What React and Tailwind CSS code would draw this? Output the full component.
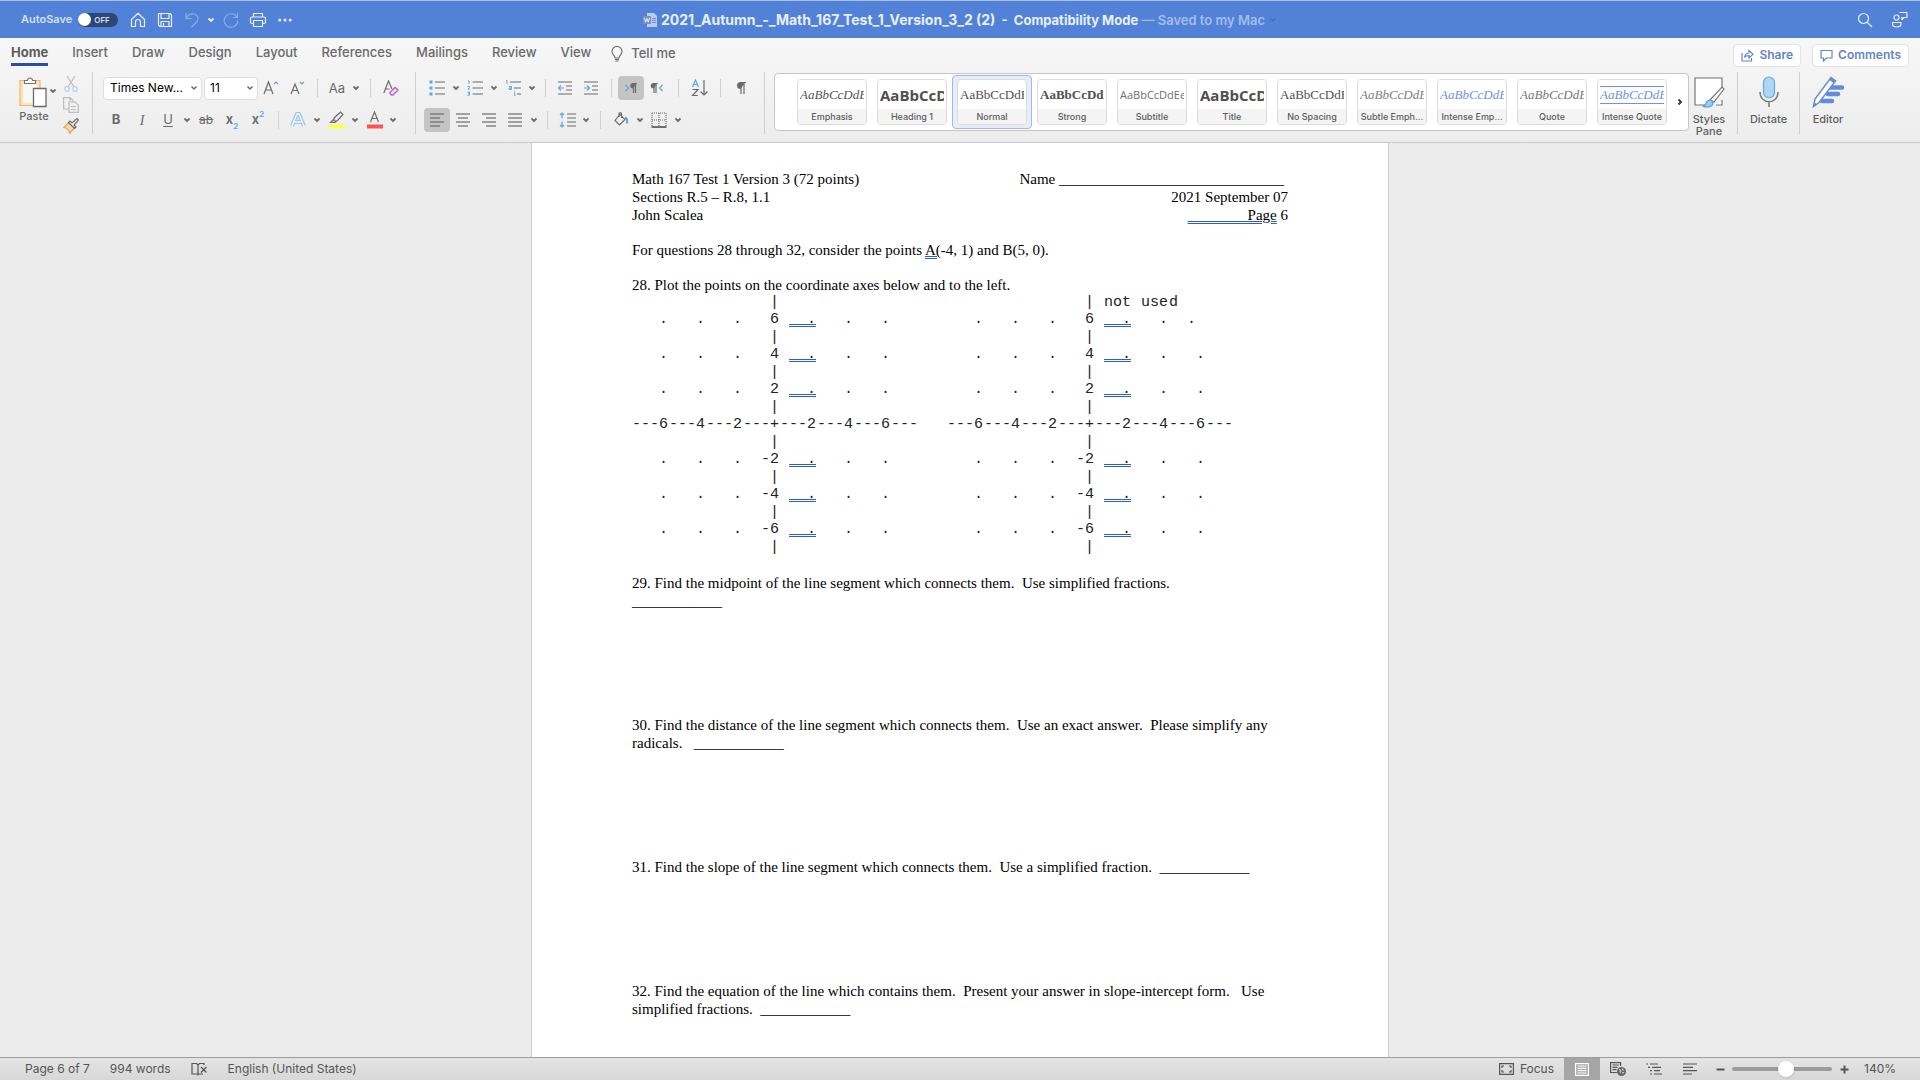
import React from "react";
import clsx from "clsx";

const TABS = ["Home", "Insert", "Draw", "Design", "Layout", "References", "Mailings", "Review", "View"];

const STYLES = [
  { name: "Emphasis", sample: "font-['Liberation_Serif',serif] text-[13px] italic text-[#555]" },
  { name: "Heading 1", sample: "font-['Open_Sans',sans-serif] text-[15px] font-bold text-[#4f4f4f]" },
  { name: "Normal", sample: "font-['Liberation_Serif',serif] text-[13px] text-[#4f4f4f]", active: true },
  { name: "Strong", sample: "font-['Liberation_Serif',serif] text-[13px] font-bold text-[#4f4f4f]" },
  { name: "Subtitle", sample: "font-['Open_Sans',sans-serif] text-[11px] text-[#6f6f6f]" },
  { name: "Title", sample: "font-['Open_Sans',sans-serif] text-[15px] font-bold text-[#4f4f4f]" },
  { name: "No Spacing", sample: "font-['Liberation_Serif',serif] text-[13px] text-[#4f4f4f]" },
  { name: "Subtle Emph...", sample: "font-['Liberation_Serif',serif] text-[13px] italic text-[#808080]" },
  { name: "Intense Emp...", sample: "font-['Liberation_Serif',serif] text-[13px] italic text-[#6f93de]" },
  { name: "Quote", sample: "font-['Liberation_Serif',serif] text-[13px] italic text-[#777]" },
  { name: "Intense Quote", sample: "font-['Liberation_Serif',serif] text-[13px] italic text-[#6f93de] border-y border-[#6f93de]" },
];

// every row is cut into cells of four characters, "_" marks a flagged blank
const POINTS = "   .   .   .";
const AXIS = "---6---4---2---+---2---4---6---";
const TICK = "               |";

function buildRows(note, firstTail) {
  const label = (n, tail) => POINTS + n.padStart(4) + " __." + (tail || "   .   .");
  return [
    TICK + note,
    label("6", firstTail),
    TICK,
    label("4"),
    TICK,
    label("2"),
    TICK,
    AXIS,
    TICK,
    label("-2"),
    TICK,
    label("-4"),
    TICK,
    label("-6"),
    TICK,
  ];
}

function Svg({ w = 16, h = 16, label, children, className }) {
  return (
    <svg
      width={w}
      height={h}
      viewBox={`0 0 ${w} ${h}`}
      fill="none"
      stroke="currentColor"
      strokeWidth="1.2"
      aria-label={label}
      className={clsx("shrink-0", className)}
    >
      {children}
    </svg>
  );
}

function Chevron({ label = "More options" }) {
  return (
    <button aria-label={label} className="flex w-3 shrink-0 justify-center text-[#6b6b6b]">
      <Svg w={8} h={6}>
        <path d="M1.5 1.5 4 4l2.500-2.500" strokeWidth="1.800" />
      </Svg>
    </button>
  );
}

function Tool({ label, active, children }) {
  return (
    <button
      aria-label={label}
      className={clsx(
        "flex h-6 w-[26px] shrink-0 items-center justify-center rounded-sm text-[#6b6b6b]",
        active && "bg-[#c4c4c4]"
      )}
    >
      {children}
    </button>
  );
}

function Sep({ wide }) {
  return (
    <div className={clsx("flex shrink-0 justify-center", wide ? "w-4" : "w-[14px]")}>
      <div className="h-[18px] w-px bg-[#d0d0d0]" />
    </div>
  );
}

function GroupSep() {
  return <div className="h-[62px] w-px shrink-0 bg-[#cfcfcf]" />;
}

function AlignIcon({ lines }) {
  return (
    <Svg w={16} h={16}>
      {lines.map(([from, to], i) => (
        <path key={i} d={`M${from} ${2 + i * 4}H${to}`} />
      ))}
    </Svg>
  );
}

function TitleButton({ label, dim, children }) {
  return (
    <button
      aria-label={label}
      className={clsx("flex w-[27px] justify-center", dim ? "text-[#8dace5]" : "text-[#e8effb]")}
    >
      {children}
    </button>
  );
}

function TitleBar() {
  return (
    <header className="grid h-[38px] shrink-0 grid-cols-[1fr_auto_1fr] items-center border-t border-[#a9c1eb] bg-[#5282d7] text-[#e8effb]">
      <div className="flex items-center pl-[21px]">
        <label className="flex items-center gap-[6px] text-[11px] font-semibold text-[#d3e0f6]">
          <span>AutoSave</span>
          <span className="relative flex h-[14px] w-10 items-center rounded-full bg-[#2c4677]">
            <input type="checkbox" className="absolute inset-0 appearance-none" />
            <span className="size-[13px] rounded-full bg-white" />
            <span className="pl-[3px] text-[8px] font-semibold">OFF</span>
          </span>
        </label>
        <div className="flex items-center pl-[6px]">
          <TitleButton label="Home">
            <Svg>
              <path d="M1.500 7.500 8 1.300l6.500 6.200V14.500h-4V10a2.500 2.500 0 0 0-5 0v4.500h-4z" strokeLinejoin="round" />
            </Svg>
          </TitleButton>
          <TitleButton label="Save">
            <Svg>
              <path d="M1.500 1.500h11.500l1.500 1.500v11.500h-11.500l-1.500-1.500zM4 1.500v5h8v-5M4 14.500v-5h8v5M6.500 11v3.500" strokeLinejoin="round" />
            </Svg>
          </TitleButton>
          <TitleButton label="Undo" dim>
            <Svg>
              <path d="M2 1v5.500h5.500M2 6.500C4 3 7 1.500 10 2c4 .8 5.200 4.500 3 7.500L7.500 15" />
            </Svg>
          </TitleButton>
          <button aria-label="Undo history" className="flex w-3 justify-center">
            <Svg w={8} h={6}>
              <path d="M1.500 1.500 4 4l2.500-2.500" strokeWidth="1.800" />
            </Svg>
          </button>
          <TitleButton label="Redo" dim>
            <Svg>
              <path d="M14.500 1v4.500H10M13.800 5A6.800 6.800 0 1 0 14.800 8.500" />
            </Svg>
          </TitleButton>
          <TitleButton label="Print">
            <Svg w={18}>
              <path d="M4.500 5V1.500h9V5M4.500 11.500H3A1.500 1.500 0 0 1 1.500 10V6.500A1.500 1.500 0 0 1 3 5h12a1.500 1.500 0 0 1 1.500 1.500V10a1.500 1.500 0 0 1-1.500 1.500h-1.500M4.500 8.500h9v6h-9z" strokeLinejoin="round" />
            </Svg>
          </TitleButton>
          <TitleButton label="More">
            <Svg w={14} h={4}>
              <g fill="currentColor" stroke="none">
                <circle cx="1.800" cy="2" r="1.500" />
                <circle cx="7" cy="2" r="1.500" />
                <circle cx="12.200" cy="2" r="1.500" />
              </g>
            </Svg>
          </TitleButton>
        </div>
      </div>

      <div className="flex items-center gap-1 whitespace-pre">
        <Svg w={14} h={14}>
          <path d="M4 0h7l3 3v11H4z" fill="#b9cdf0" stroke="none" />
          <path d="M9 5.500h4M9 7.500h4M9 9.500h4" stroke="#6a90d6" strokeWidth="1" />
          <rect x="0" y="3" width="8" height="8" fill="#8094bb" stroke="none" />
          <path d="m1.500 5 1.200 4L4 5.500 5.300 9l1.200-4" stroke="#dfe8f8" strokeWidth="1" />
        </Svg>
        <h1 className="text-[13px] font-bold">
          <span className="text-[14px]">2021_Autumn_-_Math_167_Test_1_Version_3_2 (2)</span>
          {"  -  Compatibility Mode"}
          <span className="font-semibold text-[#a3bdea]"> — Saved to my Mac</span>
        </h1>
        <Svg w={8} h={6} className="text-[#4270c2]">
          <path d="M1.500 1.500 4 4l2.500-2.500" strokeWidth="1.500" />
        </Svg>
      </div>

      <div className="flex items-center justify-end gap-[18px] pr-3">
        <button aria-label="Search">
          <Svg>
            <circle cx="6.500" cy="6.500" r="5" />
            <path d="m10.200 10.200 4.800 4.800" />
          </Svg>
        </button>
        <button aria-label="Presence">
          <Svg w={17} h={17}>
            <circle cx="5.500" cy="6.500" r="2.500" />
            <path d="M1.500 11.500h8.500v1.500c0 4-8.500 4-8.500 0zM8.500 1.500h7.500v5h-3l-2 2v-2h-1" strokeLinejoin="round" />
          </Svg>
        </button>
      </div>
    </header>
  );
}

function TabBar() {
  return (
    <nav className="flex h-[34px] items-center pr-[11px] pl-[11px] text-[13px] font-medium text-[#6a6a6a]">
      <div className="flex h-full items-center gap-6">
        {TABS.map((tab, i) => (
          <a
            key={tab}
            href={`#${tab.toLowerCase()}`}
            className={clsx(
              "flex h-7 self-start border-b-3 pt-[5px]",
              i === 0 ? "border-[#27509b] font-bold text-[#5c5c5c]" : "border-transparent"
            )}
          >
            {tab}
          </a>
        ))}
      </div>
      <button className="ml-5 flex items-center gap-2 pb-[3px]">
        <Svg w={12} h={16}>
          <path d="M4 12c0-2.500-3-3.500-3-6.500a5 5 0 0 1 10 0c0 3-3 4-3 6.500zM4 13.500h4M4.500 15h3" strokeWidth="1.100" />
        </Svg>
        Tell me
      </button>
      <div className="ml-auto flex gap-[11px] text-[12px] font-semibold text-[#6486c4]">
        <button className="flex h-[23px] items-center gap-[5px] rounded-sm border border-[#e2e2e2] bg-white px-[7px]">
          <Svg w={13} h={13}>
            <path d="M1 4v8h9.500V9M3.500 8.500C4 5.500 5.500 4 8 4V1.500l4 3.800L8 9V6.500c-2 0-3.500.5-4.500 2z" />
          </Svg>
          Share
        </button>
        <button className="flex h-[23px] items-center gap-[5px] rounded-sm border border-[#e2e2e2] bg-white px-[7px]">
          <Svg w={13} h={13}>
            <path d="M1 1.500h11v7.500H6.500L3.500 12V9H1z" />
          </Svg>
          Comments
        </button>
      </div>
    </nav>
  );
}

function ClipboardGroup() {
  return (
    <div className="flex w-[92px] shrink-0 justify-end gap-1 pr-[13px] pt-1">
      <div className="flex flex-col items-center">
        <div className="flex items-start">
          <button aria-label="Paste" className="flex pl-[10px]">
            <Svg w={28} h={32} className="text-[#6b6b6b]">
              <path d="M1 4.500h20v25H1z" fill="#fde3b5" stroke="#f0b76c" />
              <path d="M4 7h14v20H4z" fill="#f7f7f7" stroke="none" />
              <path d="M5.500 7.500V4.500h3a2.500 2.500 0 0 1 5 0h3v3z" fill="#fff" stroke="#777" />
              <path d="M14.500 12.500h12.500v18H14.500z" fill="#fff" strokeWidth="1.300" />
            </Svg>
          </button>
          <div className="pt-3">
            <Chevron label="Paste options" />
          </div>
        </div>
        <span className="text-[11px] leading-[17px] font-medium text-[#666]">Paste</span>
      </div>
      <div className="flex flex-col gap-[5px]">
        <button aria-label="Cut">
          <Svg className="text-[#bdbdbd]">
            <path d="m4 0 7 11M12 0 5 11" />
            <circle cx="4" cy="13" r="2.300" stroke="#b4d3ee" />
            <circle cx="12" cy="13" r="2.300" stroke="#b4d3ee" />
          </Svg>
        </button>
        <button aria-label="Copy">
          <Svg className="text-[#bdbdbd]">
            <path d="M6 12H.600V.600H7l3 3V5M7 .600V4" />
            <path d="M6 5h6l3.400 3v7.400H6zM8 9.500h5M8 12.500h5" />
          </Svg>
        </button>
        <button aria-label="Format painter">
          <Svg className="text-[#666]">
            <path d="M6 4.500.800 9.500c3 .5 5 2.500 6 5.700L12 9.500z" fill="#fbd7ad" stroke="#ee9f58" />
            <path d="m5.500 4.500 6 6 1.500-1.500-2-2L15.500 2 14 .600 9 5 7 3z" fill="#fff" />
          </Svg>
        </button>
      </div>
    </div>
  );
}

function FontGroup() {
  return (
    <div className="w-[322px] shrink-0 pl-[10px]">
      <div className="flex h-8 items-center">
        <div className="flex items-center gap-[2px]">
          <span className="relative flex items-center">
            <select
              aria-label="Font"
              className="h-[23px] w-[99px] appearance-none rounded-sm border border-[#dedede] bg-white px-[6px] text-[12px] text-black"
            >
              <option>Times New...</option>
            </select>
            <Svg w={8} h={6} className="pointer-events-none absolute right-1 text-[#6b6b6b]">
              <path d="M1.500 1.500 4 4l2.500-2.500" strokeWidth="1.500" />
            </Svg>
          </span>
          <span className="relative flex items-center">
            <select
              aria-label="Font size"
              className="h-[23px] w-[54px] appearance-none rounded-sm border border-[#dedede] bg-white px-[5px] text-[12px] text-black"
            >
              <option>11</option>
            </select>
            <Svg w={8} h={6} className="pointer-events-none absolute right-1 text-[#6b6b6b]">
              <path d="M1.500 1.500 4 4l2.500-2.500" strokeWidth="1.500" />
            </Svg>
          </span>
        </div>
        <Tool label="Grow font">
          <Svg>
            <path d="m1 14 4.500-12 4.500 12M2.500 10h6" />
            <path d="m11 4 2-2 2 2" stroke="#5aa9dd" />
          </Svg>
        </Tool>
        <Tool label="Shrink font">
          <Svg>
            <path d="M2 14 6 4l4 10M3.500 10.500h5" />
            <path d="m11 2 2 2 2-2" stroke="#5aa9dd" />
          </Svg>
        </Tool>
        <Sep />
        <Tool label="Change case">
          <span className="text-[13px] leading-4">Aa</span>
        </Tool>
        <Chevron />
        <Sep wide />
        <Tool label="Clear formatting">
          <Svg>
            <path d="M.800 13 5.500 1l3.500 8M2.500 9h4" />
            <path d="m7 12.500 5-5 3 2.500-5 5H8.500L7 13.500z" stroke="#b869c8" strokeWidth="1.500" fill="#f5e4f8" />
          </Svg>
        </Tool>
      </div>
      <div className="flex h-8 items-center">
        <Tool label="Bold">
          <span className="text-[13px] font-bold">B</span>
        </Tool>
        <Tool label="Italic">
          <span className="font-['Liberation_Serif',serif] text-[14px] italic">I</span>
        </Tool>
        <Tool label="Underline">
          <span className="text-[13px] underline underline-offset-2">U</span>
        </Tool>
        <Chevron />
        <Tool label="Strikethrough">
          <span className="text-[12px] line-through">ab</span>
        </Tool>
        <Tool label="Subscript">
          <span className="text-[13px] font-semibold">x</span>
          <span className="self-end text-[8px] font-semibold text-[#5aa9dd]">2</span>
        </Tool>
        <Tool label="Superscript">
          <span className="text-[13px] font-semibold">x</span>
          <span className="self-start text-[8px] font-semibold text-[#5aa9dd]">2</span>
        </Tool>
        <Sep />
        <Tool label="Text effects">
          <Svg>
            <path d="M2 14 7 2h2l5 12M4.500 10h7" stroke="#9cc6ea" strokeWidth="4" />
            <path d="M2 14 7 2h2l5 12M4.500 10h7" stroke="#f4f9fd" strokeWidth="1.500" />
          </Svg>
        </Tool>
        <Chevron />
        <Tool label="Highlight">
          <Svg w={17} h={18}>
            <path d="m6 7 6.500-6L15 3.500 9 10H6zM6 8l-3.500 3.500H7L8.500 10" />
            <path d="M1 13.500h16v4H1z" fill="#ffff52" stroke="none" />
          </Svg>
        </Tool>
        <Chevron />
        <Tool label="Font colour">
          <Svg w={17} h={18}>
            <path d="M4.500 11 8.500 1l4 10M6 7.500h5" />
            <path d="M1 13.500h16v4H1z" fill="#ff5252" stroke="none" />
          </Svg>
        </Tool>
        <Chevron />
      </div>
    </div>
  );
}

function ParagraphGroup() {
  return (
    <div className="w-[348px] shrink-0 pl-[8px]">
      <div className="flex h-8 items-center">
        <Tool label="Bullets">
          <Svg>
            <path d="M6 2h10M6 8h10M6 14h10" />
            <path d="M.500 .500h3v3h-3zM.500 6.500h3v3h-3zM.500 12.500h3v3h-3z" fill="#5aa9dd" stroke="none" />
          </Svg>
        </Tool>
        <Chevron />
        <Tool label="Numbering">
          <Svg>
            <path d="M5.500 2H16M5.500 8H16M5.500 14H16" />
            <path d="M1 1h1v3M.500 6.500h2v1.200l-1.500 1.500h1.800M.500 12h2v3.200H.500M1 13.600h1.500" stroke="#5aa9dd" strokeWidth="1" />
          </Svg>
        </Tool>
        <Chevron />
        <Tool label="Multilevel list">
          <Svg>
            <path d="M5 2h11M9 8h7M12 14h4" />
            <path d="M1 .500h1V4M4 6.500h2.500v3H4V8h2.500M9 12.500h.8V16M9.500 10.500v.8" stroke="#5aa9dd" strokeWidth="1" />
          </Svg>
        </Tool>
        <Chevron />
        <Sep />
        <Tool label="Decrease indent">
          <Svg>
            <path d="M1 2h14M9 6h6M9 10h6M1 14h14" />
            <path d="M7 8H1.500M4 5.500 1.500 8 4 10.500" stroke="#5aa9dd" />
          </Svg>
        </Tool>
        <Tool label="Increase indent">
          <Svg>
            <path d="M1 2h14M9 6h6M9 10h6M1 14h14" />
            <path d="M1 8h5.500M4 5.500 6.500 8 4 10.500" stroke="#5aa9dd" />
          </Svg>
        </Tool>
        <Sep />
        <Tool label="Left-to-right text" active>
          <Svg w={14} h={12}>
            <path d="m1.500 3 3 3-3 3" stroke="#5aa9dd" />
            <path d="M9 6.500a2.700 2.700 0 0 1 0-5.500h4" fill="currentColor" stroke="none" />
            <path d="M9.500 1v10M11.500 1v10M8.500 1.500H13" />
          </Svg>
        </Tool>
        <Tool label="Right-to-left text">
          <Svg w={14} h={12}>
            <path d="m12.500 3-3 3 3 3" stroke="#5aa9dd" />
            <path d="M3.500 6.500a2.700 2.700 0 0 1 0-5.500h4" fill="currentColor" stroke="none" />
            <path d="M4 1v10M6 1v10M3 1.500h4.500" />
          </Svg>
        </Tool>
        <Sep wide />
        <Tool label="Sort">
          <Svg w={17} h={18}>
            <path d="M1.500 8 4.500 1l3 7M2.500 5.500h4" stroke="#5aa9dd" />
            <path d="M1.500 10.500h5.500l-5.500 6H7M13 1v15M9.500 12.500 13 16l3.500-3.500" />
          </Svg>
        </Tool>
        <Sep wide />
        <Tool label="Show formatting marks">
          <Svg w={12} h={14}>
            <path d="M5.500 8a3.500 3.500 0 0 1 0-7h5" fill="currentColor" stroke="none" />
            <path d="M6 1v12M9 1v12M5 1.500h6" />
          </Svg>
        </Tool>
      </div>
      <div className="flex h-8 items-center">
        <Tool label="Align left" active>
          <AlignIcon lines={[[1, 15], [1, 11], [1, 15], [1, 11]]} />
        </Tool>
        <Tool label="Align centre">
          <AlignIcon lines={[[1, 15], [3, 13], [1, 15], [3, 13]]} />
        </Tool>
        <Tool label="Align right">
          <AlignIcon lines={[[1, 15], [5, 15], [1, 15], [5, 15]]} />
        </Tool>
        <Tool label="Justify">
          <AlignIcon lines={[[1, 15], [1, 15], [1, 15], [1, 15]]} />
        </Tool>
        <Chevron />
        <Sep />
        <Tool label="Line spacing">
          <Svg w={17}>
            <path d="M8 2h9M8 6h9M8 10h9M8 14h9" />
            <path d="M3 1v5.500M1 3l2-2 2 2M3 9.500V15M1 13l2 2 2-2" stroke="#5aa9dd" />
          </Svg>
        </Tool>
        <Chevron />
        <Sep wide />
        <Tool label="Shading">
          <Svg>
            <path d="M6 3.500 2 8.500l4.500 4.500 5.500-5.500-5-5zM6 5V1.500c0-1 2.500-1 2.500 0V6" />
            <path d="M12 5.500c2 .5 2.500 2.500 2 6" stroke="#5aa9dd" strokeWidth="2" />
          </Svg>
        </Tool>
        <Chevron />
        <Tool label="Borders">
          <Svg>
            <path d="M1 1h14M1 8h14M1 1v14M8 1v14M15 1v14" strokeDasharray="1 1" />
            <path d="M.500 15h15" strokeWidth="1.500" stroke="#444" />
          </Svg>
        </Tool>
        <Chevron />
      </div>
    </div>
  );
}

function StyleGallery() {
  return (
    <div className="ml-[9px] mt-px flex h-[58px] min-w-0 flex-1 items-center rounded-sm border border-[#c6c6c6] bg-white">
      <div className="flex min-w-0 flex-1 overflow-hidden pl-[17px]">
        {STYLES.map((style) => (
          <button
            key={style.name}
            className={clsx(
              "flex h-[54px] w-20 shrink-0 items-center justify-center rounded-sm border",
              style.active ? "border-[#9fb9e8] bg-[#e6edf8]" : "border-transparent"
            )}
          >
            <span className="flex h-[46px] w-[70px] flex-col overflow-hidden rounded-sm border border-[#dcdcdc] bg-white">
              <span className="flex flex-1 items-center px-[2px]">
                <span className={clsx("w-full overflow-hidden text-left leading-4 whitespace-nowrap", style.sample)}>
                  AaBbCcDdEe
                </span>
              </span>
              <span className="h-[15px] bg-[#f4f4f4] text-[9px] leading-[15px] font-medium text-[#5c5c5c]">
                {style.name}
              </span>
            </span>
          </button>
        ))}
      </div>
      <button aria-label="More styles" className="flex w-[17px] shrink-0 justify-center text-[#333]">
        <Svg w={6} h={8}>
          <path d="m1.500 1.500 2.500 2.500-2.500 2.500" strokeWidth="1.800" />
        </Svg>
      </button>
    </div>
  );
}

function BigButtons() {
  return (
    <div className="flex shrink-0 text-[11px] leading-3 font-medium text-[#5f5f5f]">
      <button className="flex w-12 flex-col items-center gap-[5px] pr-2 pt-1">
        <Svg w={32} h={32}>
          <path d="M12 29H2V2h27v10M29 24v5h-6" fill="#fff" stroke="#777" />
          <path d="M17 24 29 11l2 2-10 13z" fill="#fff" stroke="#777" />
          <path d="M10 30c4 0 2-6 7-6 4 1 4 6-1 7-3 0-5 0-6-1z" fill="#9ccdf0" stroke="#5a9fd6" />
        </Svg>
        <span>Styles Pane</span>
      </button>
      <GroupSep />
      <button className="flex w-[61px] flex-col items-center gap-[5px] pt-1">
        <Svg w={20} h={32}>
          <rect x="4.500" y="1" width="11" height="21" rx="5.500" fill="#add6f4" stroke="#6aa7d8" />
          <path d="M1 16c0 13 18 13 18 0M10 26v5" stroke="#7a7a7a" strokeWidth="1.500" />
        </Svg>
        Dictate
      </button>
      <GroupSep />
      <button className="mr-16 flex w-[56px] flex-col items-center gap-[5px] pt-1">
        <Svg w={32} h={32}>
          <path d="M18 11.500h12M16 18h10M10 25h10" stroke="#638cdb" strokeWidth="4.500" strokeLinecap="round" />
          <path d="M19 1.500 23.500 5 7 26.500 1.500 30.500 3 23z" fill="#fff" stroke="#638cdb" strokeWidth="1.500" />
          <path d="m17 3.500 5 4 2-2.500-5-4z" fill="#638cdb" stroke="none" />
          <path d="m1 31 1-5 3 2.500z" fill="#638cdb" stroke="none" />
        </Svg>
        Editor
      </button>
    </div>
  );
}

function Ribbon() {
  return (
    <div className="shrink-0 border-b border-[#c9c9c9] bg-linear-to-b from-[#f7f7f7] to-[#ededed]">
      <TabBar />
      <div className="flex h-[70px] items-start">
        <ClipboardGroup />
        <GroupSep />
        <FontGroup />
        <GroupSep />
        <ParagraphGroup />
        <GroupSep />
        <StyleGallery />
        <BigButtons />
      </div>
    </div>
  );
}

function Flag({ children }) {
  return (
    <span className="underline decoration-[#2b5fd9] decoration-double decoration-1 underline-offset-1">
      {children}
    </span>
  );
}

function Axes({ rows }) {
  return (
    <div className="font-['Liberation_Mono',monospace] text-[15px] whitespace-pre text-[#222]">
      {rows.map((row, i) => (
        <div
          key={i}
          className={clsx("grid grid-cols-[repeat(8,37px)]", i % 2 ? "leading-[18px]" : "leading-[17px]")}
        >
          {row.match(/.{1,4}/g).map((cell, j) => (
            <span key={j}>
              {cell.includes("__") ? (
                <>
                  {" "}
                  <Flag>{"  ."}</Flag>
                </>
              ) : (
                cell
              )}
            </span>
          ))}
        </div>
      ))}
    </div>
  );
}

function Page() {
  return (
    <article className="w-[858px] border-x border-[#cdcdcd] bg-white px-[100px] pt-[27px] font-['Liberation_Serif',serif] text-[15px] leading-[18px] whitespace-pre text-black">
      <div className="flex justify-between">
        <div>
          <p>Math 167 Test 1 Version 3 (72 points)</p>
          <p>Sections R.5 – R.8, 1.1</p>
          <p>John Scalea</p>
        </div>
        <div className="text-right">
          <p className="pr-1">Name ______________________________</p>
          <p>2021 September 07</p>
          <p>
            <Flag>{"                Page"}</Flag> 6
          </p>
        </div>
      </div>

      <p className="mt-[17px]">
        For questions 28 through 32, consider the points <Flag>A(</Flag>-4, 1) and B(5, 0).
      </p>

      <section className="mt-[17px]">
        <p>28. Plot the points on the coordinate axes below and to the left.</p>
        <div className="flex gap-[19px]">
          <Axes rows={buildRows("")} />
          <Axes rows={buildRows(" not used", "   .  .")} />
        </div>
      </section>

      <section className="mt-[18px]">
        <p>29. Find the midpoint of the line segment which connects them.  Use simplified fractions.</p>
        <p>____________</p>
      </section>

      <section className="mt-[106px]">
        <p>30. Find the distance of the line segment which connects them.  Use an exact answer.  Please simplify any</p>
        <p>radicals.   ____________</p>
      </section>

      <section className="mt-[106px]">
        <p>31. Find the slope of the line segment which connects them.  Use a simplified fraction.  ____________</p>
      </section>

      <section className="mt-[106px]">
        <p>32. Find the equation of the line which contains them.  Present your answer in slope-intercept form.   Use</p>
        <p>simplified fractions.  ____________</p>
      </section>
    </article>
  );
}

function StatusBar() {
  return (
    <footer className="flex h-[23px] shrink-0 items-center border-t border-[#9d9d9d] bg-linear-to-b from-[#e4e4e4] to-[#d8d8d8] pr-6 pl-[25px] text-[12px] text-[#555]">
      <div className="flex items-center gap-5">
        <span>Page 6 of 7</span>
        <span>994 words</span>
        <button aria-label="Proofing">
          <Svg w={17} h={14}>
            <path d="M7 12H1V1.500h4.500L7 3l1.500-1.500H13V3M7 3v10.500M7 12h5M10 5l5.500 5.500M15.500 5 10 10.500" />
          </Svg>
        </button>
        <span>English (United States)</span>
      </div>
      <div className="ml-auto flex h-full items-center">
        <button className="flex items-center gap-[6px] pr-[10px]">
          <Svg w={15} h={12}>
            <path d="M.600 .600h13.800v10.800H.600zM3 5V3h2M10 3h2v2M3 7v2h2M10 9h2V7" />
          </Svg>
          Focus
        </button>
        <button aria-label="Print layout" className="flex h-full w-9 items-center justify-center bg-[#a6a6a6] text-white">
          <Svg w={14} h={13}>
            <path d="M.600 .600h12.800v11.800H.600zM2.500 3h9M2.500 5.300h9M2.500 7.600h9M2.500 10h9" />
          </Svg>
        </button>
        <button aria-label="Web layout" className="flex w-9 justify-center">
          <Svg w={16} h={14}>
            <path d="M7 10.500H.600V.600h10V4M2.500 3H9M2.500 5.300h5M2.500 7.600h4" />
            <circle cx="11.500" cy="9.500" r="4.500" fill="#666" stroke="none" />
            <path d="M9 7.500c2 0 2 2 1 3M12 6.500l1.500 2M12 11l2-.5" stroke="#ddd" />
          </Svg>
        </button>
        <button aria-label="Outline" className="flex w-9 justify-center">
          <Svg w={16} h={12}>
            <path d="M0 1h2M4 1h8M2 4.300h2M6 4.300h9M4 7.600h2M8 7.600h6M4 11h2M8 11h8" />
          </Svg>
        </button>
        <button aria-label="Draft" className="flex w-9 justify-center">
          <Svg w={14} h={12}>
            <path d="M0 1h14M0 4.300h10M0 7.600h14M0 11h9" />
          </Svg>
        </button>
        <button aria-label="Zoom out" className="flex w-6 justify-center">
          <Svg w={9} h={9}>
            <path d="M.500 4.500h8" strokeWidth="2" />
          </Svg>
        </button>
        <input
          type="range"
          aria-label="Zoom"
          defaultValue="55"
          className="h-4 w-[100px] appearance-none bg-transparent [&::-webkit-slider-runnable-track]:h-1 [&::-webkit-slider-runnable-track]:rounded-full [&::-webkit-slider-runnable-track]:bg-[#9b9b9b] [&::-webkit-slider-thumb]:-mt-[6px] [&::-webkit-slider-thumb]:size-4 [&::-webkit-slider-thumb]:appearance-none [&::-webkit-slider-thumb]:rounded-full [&::-webkit-slider-thumb]:bg-white [&::-webkit-slider-thumb]:shadow"
        />
        <button aria-label="Zoom in" className="flex w-6 justify-center">
          <Svg w={9} h={9}>
            <path d="M.500 4.500h8M4.500 .500v8" strokeWidth="2" />
          </Svg>
        </button>
        <span className="pl-2">140%</span>
      </div>
    </footer>
  );
}

export default function App() {
  return (
    <div className="flex h-screen flex-col overflow-hidden bg-[#ececec] font-['Inter',sans-serif]">
      <TitleBar />
      <Ribbon />
      <main className="flex min-h-0 flex-1 justify-center overflow-hidden">
        <Page />
      </main>
      <StatusBar />
    </div>
  );
}
